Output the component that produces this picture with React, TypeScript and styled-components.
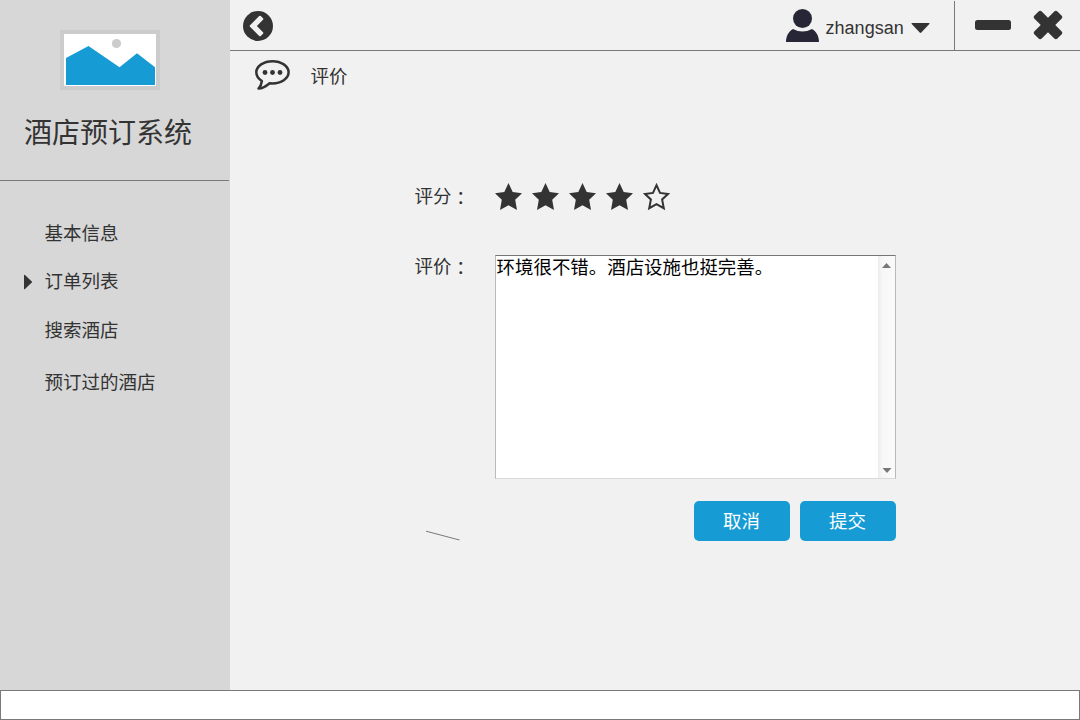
import React from 'react';
import styled, { createGlobalStyle } from 'styled-components';

const INK = '#333333';
const LINE = '#797979';
const BLUE = '#169bd5';

const GlobalStyle = createGlobalStyle`
  * { box-sizing: border-box; }
  body {
    margin: 0;
    font-family: "Liberation Sans", "Noto Sans CJK SC", sans-serif;
    font-size: 18.5px;
    font-weight: 400;
    line-height: 24px;
    color: ${INK};
  }
  svg { display: block; flex: none; }
`;

const Window = styled.div`
  width: 1080px;
  height: 720px;
  display: flex;
  flex-direction: column;
  overflow: hidden;
  background: #f1f1f1;
`;

const Body = styled.div`
  display: flex;
  height: 690px;
`;

const StatusBar = styled.footer`
  height: 30px;
  background: #fff;
  border: 1px solid ${LINE};
`;

const Sidebar = styled.aside`
  width: 230px;
  background: #d7d7d7;
`;

const Brand = styled.div`
  width: 229px;
  height: 181px;
  padding-top: 30px;
  border-bottom: 1px solid ${LINE};
`;

const Logo = styled.svg`
  margin-left: 60px;
`;

const Title = styled.h1`
  margin: 24px 0 0 24px;
  font-size: 28px;
  line-height: 40px;
  font-weight: 400;
  white-space: nowrap;
`;

const Menu = styled.nav`
  padding: 41px 0 0 23px;
`;

const MenuItem = styled.a<{ $gap: number }>`
  display: flex;
  align-items: center;
  height: 24px;
  margin-bottom: ${({ $gap }) => $gap}px;
  white-space: nowrap;
`;

const Marker = styled.span`
  width: 21.6px;
`;

const Main = styled.main`
  width: 850px;
`;

const TopBar = styled.header`
  display: flex;
  height: 51px;
  padding: 1px 17px 0 13px;
  border-bottom: 1px solid ${LINE};
`;

const BackIcon = styled.svg`
  margin: 10px auto 0 0;
`;

const User = styled.div`
  display: flex;
  width: 168px;
  padding-top: 8px;
`;

const UserName = styled.span`
  font-size: 18px;
  margin: 7px 7.4px 0 6.6px;
`;

const CaretIcon = styled.svg`
  margin-top: 14px;
`;

const WindowControls = styled.div`
  display: flex;
  gap: 22px;
  padding: 9px 0 0 20px;
  border-left: 1px solid ${LINE};
`;

const PageHeading = styled.div`
  display: flex;
  height: 50px;
  padding: 8px 0 0 24px;
`;

const PageTitle = styled.span`
  margin: 6px 0 0 19.6px;
`;

const Form = styled.form`
  width: 481.4px;
  margin: 82px 0 0 184.6px;
`;

const Field = styled.div<{ $height: number }>`
  display: flex;
  height: ${({ $height }) => $height}px;
`;

const Label = styled.label<{ $top: number }>`
  width: 80.4px;
  flex: none;
  padding-top: ${({ $top }) => $top}px;
  white-space: nowrap;
`;

const Colon = styled.span`
  font-family: "Noto Sans CJK TC", sans-serif;
  line-height: 0;
  vertical-align: -2px;
`;

const Stars = styled.div`
  display: flex;
  gap: 9px;
`;

const CommentBox = styled.div`
  display: flex;
  width: 401px;
  height: 224px;
  background: #fff;
  border: 1px solid #b9b9b9;
  border-top-color: #767676;
  border-bottom-color: #d9d9d9;
`;

const CommentText = styled.div`
  flex: 1;
  padding-left: 0.6px;
  font-size: 18.45px;
  line-height: 23px;
  color: #000;
`;

const Scrollbar = styled.div`
  display: flex;
  flex-direction: column;
  justify-content: space-between;
  width: 17px;
  padding: 7px 0 5px 4px;
  background: linear-gradient(90deg, #ececec, #f7f7f7 25%, #fafafa);
`;

const Actions = styled.div`
  display: flex;
  gap: 10px;
  padding: 22px 0 0 10.4px;
`;

const Dash = styled.svg`
  margin: 29px auto 0 0;
`;

const Button = styled.button`
  width: 96px;
  height: 40px;
  padding: 1px 1px 0 0;
  border: 0;
  border-radius: 5px;
  background: ${BLUE};
  color: #fff;
  font: inherit;
`;

const menu = [
  { label: '基本信息', gap: 24 },
  { label: '订单列表', gap: 25, active: true },
  { label: '搜索酒店', gap: 28 },
  { label: '预订过的酒店', gap: 0 },
];

const Star = ({ filled }: { filled: boolean }) => (
  <svg width="28" height="28" viewBox="0 0 28 28">
    <path
      d={
        filled
          ? 'M13.5 0L17.7 9.1L27 10.2L20.2 16.7L22 27L13.5 22.2L5 27L6.8 16.7L0 10.2L9.3 9.1Z'
          : 'M13.5 2.2L17 9.9L25 10.9L19.1 16.4L20.8 25.2L13.5 21.1L6.2 25.2L7.9 16.4L2 10.9L10 9.9Z'
      }
      fill={filled ? INK : 'none'}
      stroke={filled ? 'none' : INK}
      strokeWidth="2"
    />
  </svg>
);

export default function App() {
  return (
    <Window>
      <GlobalStyle />
      <Body>
        <Sidebar>
          <Brand>
            <Logo width="100" height="60" viewBox="0 0 100 60">
              <path fill="#ccc" d="M0 0H100V60H0Z" />
              <path fill="#fff" d="M4 4H96V56H4Z" />
              <circle cx="56.5" cy="13.5" r="4.6" fill="#ccc" />
              <path fill={BLUE} d="M6 28L28.5 16L59.5 37.3L77 23.3L95 37.3V55H6Z" />
            </Logo>
            <Title>酒店预订系统</Title>
          </Brand>
          <Menu>
            {menu.map(({ label, gap, active }) => (
              <MenuItem key={label} $gap={gap}>
                <Marker>
                  {active && (
                    <svg width="10" height="16" viewBox="0 0 10 16">
                      <path d="M1 1.2Q1 .3 2 1L8.8 7.4Q9.3 8 8.8 8.6L2 15Q1 15.7 1 14.8Z" fill={INK} />
                    </svg>
                  )}
                </Marker>
                {label}
              </MenuItem>
            ))}
          </Menu>
        </Sidebar>
        <Main>
          <TopBar>
            <BackIcon width="30" height="30" viewBox="0 0 30 30">
              <circle cx="15" cy="15" r="15" fill={INK} />
              <path
                d="M16.2 5.1L7 14.3Q6.3 15 7 15.7L16.2 25Q17 25.7 17.8 25L20 22.8Q20.7 22 20 21.3L13.9 15L20 8.8Q20.7 8 20 7.3L17.8 5.1Q17 4.4 16.2 5.1Z"
                fill="#f1f1f1"
              />
            </BackIcon>
            <User>
              <svg width="33" height="33" viewBox="0 0 33 33">
                <circle cx="16.5" cy="9.5" r="9.5" fill="#272636" />
                <path d="M7 20Q16.5 25 26 20C30.5 22.3 33 27.5 33 33H0C0 27.5 2.5 22.3 7 20Z" fill="#272636" />
              </svg>
              <UserName>zhangsan</UserName>
              <CaretIcon width="19" height="11" viewBox="0 0 19 11">
                <path d="M1 0H18Q19 .2 18.3 1L10.3 9.5Q9.5 10.3 8.7 9.5L.7 1Q0 .2 1 0Z" fill={INK} />
              </CaretIcon>
            </User>
            <WindowControls>
              <svg width="36" height="30" viewBox="0 0 36 30">
                <rect y="10" width="36" height="10" rx="2.5" fill={INK} />
              </svg>
              <svg width="30" height="30" viewBox="0 0 30 30">
                <g fill={INK} transform="rotate(45 15 15)">
                  <rect x="-1.2" y="9.9" width="32.4" height="10.2" rx="2.2" />
                  <rect x="9.9" y="-1.2" width="10.2" height="32.4" rx="2.2" />
                </g>
              </svg>
            </WindowControls>
          </TopBar>
          <PageHeading>
            <svg width="37" height="32" viewBox="0 0 37 32">
              <path
                d="M18.5 2.2C27.2 2.2 34.6 7 34.6 13.3S27.2 24.4 18.5 24.4L15.6 24.2C12.5 26.9 8.5 29.3 4.5 29.6C6.8 27.2 7.5 25 7.9 22C4.7 20 2.3 16.8 2.3 13.3C2.3 7 9.8 2.2 18.5 2.2Z"
                fill="none"
                stroke={INK}
                strokeWidth="2.5"
                strokeLinejoin="round"
              />
              <g fill={INK}>
                <circle cx="11" cy="13.5" r="2.4" />
                <circle cx="18.5" cy="13.5" r="2.4" />
                <circle cx="26" cy="13.5" r="2.4" />
              </g>
            </svg>
            <PageTitle>评价</PageTitle>
          </PageHeading>
          <Form>
            <Field $height={72}>
              <Label $top={2}>
                评分<Colon>：</Colon>
              </Label>
              <Stars>
                {[1, 2, 3, 4, 5].map((n) => (
                  <Star key={n} filled={n <= 4} />
                ))}
              </Stars>
            </Field>
            <Field $height={224}>
              <Label $top={0}>
                评价<Colon>：</Colon>
              </Label>
              <CommentBox>
                <CommentText>环境很不错。酒店设施也挺完善。</CommentText>
                <Scrollbar>
                  <svg width="10" height="5" viewBox="0 0 10 5">
                    <path d="M0 5L4.5 0L9 5Z" fill="#777" />
                  </svg>
                  <svg width="10" height="5" viewBox="0 0 10 5">
                    <path d="M.5 0L5 5L9.5 0Z" fill="#777" />
                  </svg>
                </Scrollbar>
              </CommentBox>
            </Field>
            <Actions>
              <Dash width="36" height="11" viewBox="0 0 36 11">
                <path d="M1 1.2L34.5 10" stroke={LINE} />
              </Dash>
              <Button type="button">取消</Button>
              <Button type="button">提交</Button>
            </Actions>
          </Form>
        </Main>
      </Body>
      <StatusBar />
    </Window>
  );
}
